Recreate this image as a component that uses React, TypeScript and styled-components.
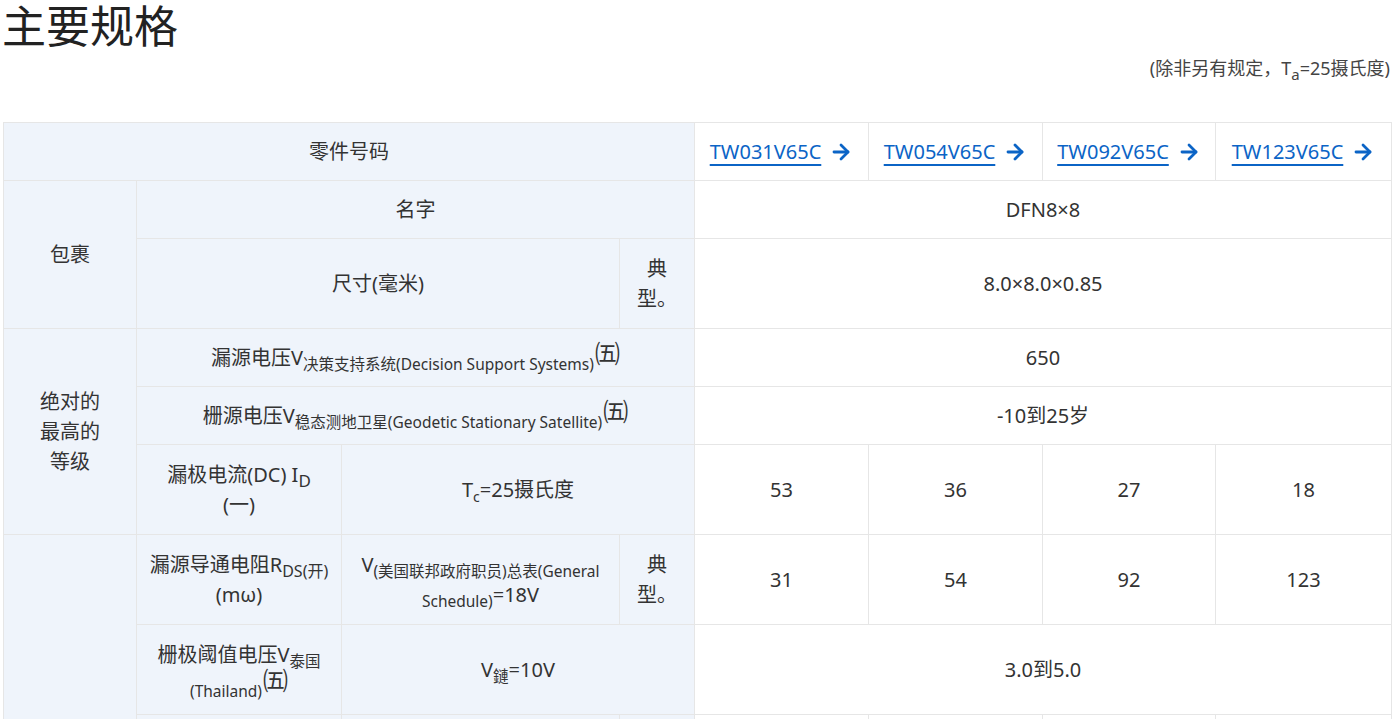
import React from "react";
import styled, { createGlobalStyle } from "styled-components";
import { ArrowRight } from "lucide-react";

const Global = createGlobalStyle`
  html, body { margin: 0; padding: 0; background: #fff; }
  body {
    font-family: "Noto Sans", "Noto Sans CJK SC", sans-serif;
    color: #333;
  }
`;

const Page = styled.div`
  padding: 0 3px 0 3px;
`;

const Title = styled.h1`
  margin: 0 0 0 -1px;
  font-size: 44px;
  font-weight: 400;
  line-height: 52px;
  color: #222;
`;

const Note = styled.p`
  margin: 1px 1px 0 0;
  text-align: right;
  font-size: 18px;
  line-height: 30px;
  color: #444;
`;

const SpecTable = styled.table`
  margin-top: 39px;
  width: 1388px;
  border-collapse: collapse;
  table-layout: fixed;
`;

const Row = styled.tr<{ $h: number }>`
  height: ${(p) => p.$h}px;
`;

const Cell = styled.td<{ $label?: boolean }>`
  border: 1px solid #e6e6e6;
  background: ${(p) => (p.$label ? "#eff4fb" : "#ffffff")};
  text-align: center;
  vertical-align: middle;
  padding: 0 12px;
  font-size: 20px;
  line-height: 30px;
  font-weight: 400;
  color: #333;
`;

const Sub = styled.sub<{ $size?: number }>`
  font-size: ${(p) => p.$size ?? 15.5}px;
  line-height: 0;
  vertical-align: sub;
`;

const Sup = styled.sup`
  font-size: 25px;
  line-height: 0;
  vertical-align: 2px;
  margin-left: 1px;
`;

const PartLink = styled.a`
  display: inline-flex;
  align-items: center;
  gap: 8px;
  color: #0b64c6;
  text-decoration: none;
  cursor: pointer;
`;

const PartName = styled.span`
  text-decoration: underline;
  text-decoration-thickness: 2px;
  text-underline-offset: 5px;
`;

const parts = ["TW031V65C", "TW054V65C", "TW092V65C", "TW123V65C"];

const FIVE = "\u3224";

export default function App() {
  return (
    <Page>
      <Global />
      <Title>主要规格</Title>
      <Note>
        (除非另有规定，T<Sub $size={15}>a</Sub>=25摄氏度)
      </Note>
      <SpecTable>
        <colgroup>
          <col style={{ width: 133 }} />
          <col style={{ width: 205 }} />
          <col style={{ width: 278 }} />
          <col style={{ width: 75 }} />
          <col style={{ width: 174 }} />
          <col style={{ width: 174 }} />
          <col style={{ width: 173 }} />
          <col style={{ width: 176 }} />
        </colgroup>
        <tbody>
          <Row $h={58}>
            <Cell $label colSpan={4}>零件号码</Cell>
            {parts.map((p) => (
              <Cell key={p}>
                <PartLink href="#">
                  <PartName>{p}</PartName>
                  <ArrowRight size={24} strokeWidth={2.8} />
                </PartLink>
              </Cell>
            ))}
          </Row>
          <Row $h={58}>
            <Cell $label rowSpan={2}>包裹</Cell>
            <Cell $label colSpan={3}>名字</Cell>
            <Cell colSpan={4}>DFN8×8</Cell>
          </Row>
          <Row $h={90}>
            <Cell $label colSpan={2}>尺寸(毫米)</Cell>
            <Cell $label>典型。</Cell>
            <Cell colSpan={4}>8.0×8.0×0.85</Cell>
          </Row>
          <Row $h={58}>
            <Cell $label rowSpan={3}>
              绝对的
              <br />
              最高的
              <br />
              等级
            </Cell>
            <Cell $label colSpan={3}>
              漏源电压V<Sub>决策支持系统(Decision Support Systems)</Sub>
              <Sup>{FIVE}</Sup>
            </Cell>
            <Cell colSpan={4}>650</Cell>
          </Row>
          <Row $h={58}>
            <Cell $label colSpan={3}>
              栅源电压V<Sub>稳态测地卫星(Geodetic Stationary Satellite)</Sub>
              <Sup>{FIVE}</Sup>
            </Cell>
            <Cell colSpan={4}>-10到25岁</Cell>
          </Row>
          <Row $h={90}>
            <Cell $label>
              漏极电流(DC) I<Sub $size={17}>D</Sub> (一)
            </Cell>
            <Cell $label colSpan={2}>
              T<Sub $size={14}>c</Sub>=25摄氏度
            </Cell>
            <Cell>53</Cell>
            <Cell>36</Cell>
            <Cell>27</Cell>
            <Cell>18</Cell>
          </Row>
          <Row $h={90}>
            <Cell $label rowSpan={5}>电气特性</Cell>
            <Cell $label>
              漏源导通电阻R<Sub $size={16}>DS(开)</Sub> (mω)
            </Cell>
            <Cell $label>
              V<Sub>(美国联邦政府职员)总表(General Schedule)</Sub>=18V
            </Cell>
            <Cell $label>典型。</Cell>
            <Cell>31</Cell>
            <Cell>54</Cell>
            <Cell>92</Cell>
            <Cell>123</Cell>
          </Row>
          <Row $h={90}>
            <Cell $label>
              栅极阈值电压V<Sub>泰国(Thailand)</Sub>
              <Sup>{FIVE}</Sup>
            </Cell>
            <Cell $label colSpan={2}>
              V<Sub>鏈</Sub>=10V
            </Cell>
            <Cell colSpan={4}>3.0到5.0</Cell>
          </Row>
          <Row $h={90}>
            <Cell $label>
              总栅极电荷Q<Sub $size={16}>g</Sub> (nC)
            </Cell>
            <Cell $label>
              V<Sub>DD</Sub>=400V
            </Cell>
            <Cell $label>典型。</Cell>
            <Cell>57</Cell>
            <Cell>36</Cell>
            <Cell>24</Cell>
            <Cell>18</Cell>
          </Row>
          <Row $h={90}>
            <Cell $label>
              输入电容C<Sub $size={16}>iss</Sub> (pF)
            </Cell>
            <Cell $label>
              V<Sub>DS</Sub>=400V
            </Cell>
            <Cell $label>典型。</Cell>
            <Cell>2288</Cell>
            <Cell>1500</Cell>
            <Cell>1000</Cell>
            <Cell>780</Cell>
          </Row>
          <Row $h={90}>
            <Cell $label>
              二极管正向电压V<Sub $size={16}>DSF</Sub>
            </Cell>
            <Cell $label>
              V<Sub>GS</Sub>=-5V
            </Cell>
            <Cell $label>典型。</Cell>
            <Cell colSpan={4}>-4.2</Cell>
          </Row>
        </tbody>
      </SpecTable>
    </Page>
  );
}
